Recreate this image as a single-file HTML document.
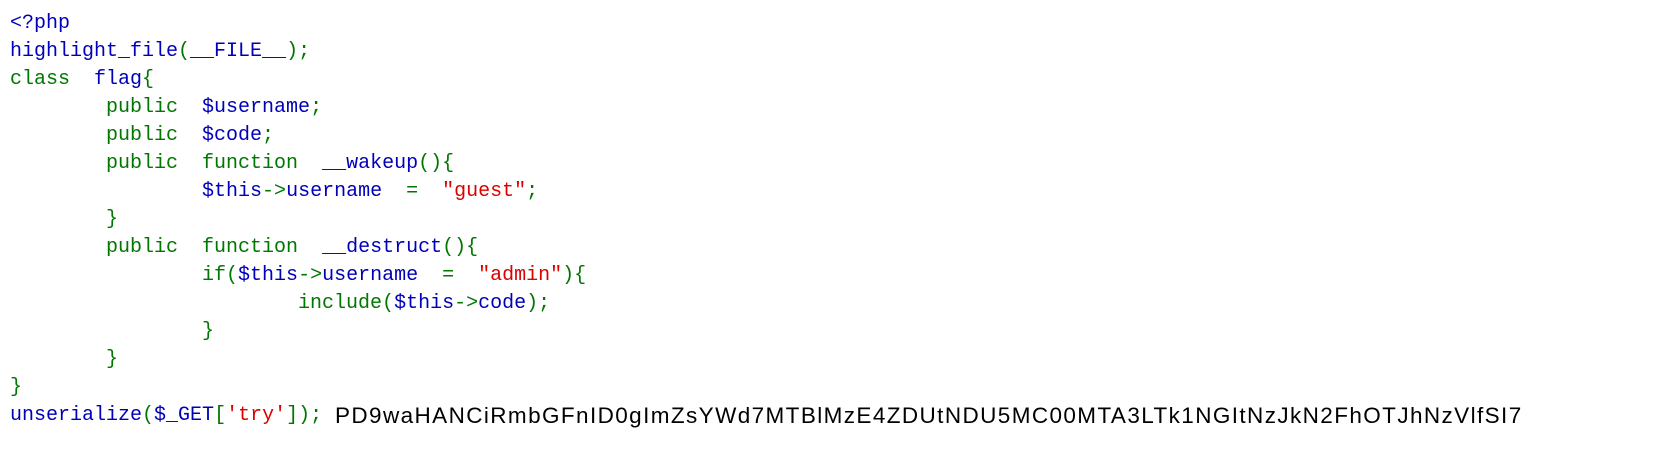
<!DOCTYPE html>
<html><head><meta charset="utf-8"><style>
html,body{margin:0;padding:0;background:#fff;width:1668px;height:450px;overflow:hidden}
pre{position:absolute;left:10px;top:10px;margin:0;font-family:"Liberation Mono",monospace;font-size:20px;line-height:28px;color:#0000BB;white-space:pre}
.k{color:#007700}.s{color:#DD0000}
.out{position:absolute;left:335px;top:402px;font-family:"Liberation Sans",sans-serif;font-size:22.5px;letter-spacing:1.4px;color:#000;white-space:nowrap;line-height:28px}
</style></head><body>
<pre>&lt;?php
highlight_file<span class="k">(</span>__FILE__<span class="k">);</span>
<span class="k">class  </span>flag<span class="k">{</span>
<span class="k">        public  </span>$username<span class="k">;</span>
<span class="k">        public  </span>$code<span class="k">;</span>
<span class="k">        public  function  </span>__wakeup<span class="k">(){</span>
                $this<span class="k">-&gt;</span>username  <span class="k">=  </span><span class="s">"guest"</span><span class="k">;</span>
<span class="k">        }</span>
<span class="k">        public  function  </span>__destruct<span class="k">(){</span>
<span class="k">                if(</span>$this<span class="k">-&gt;</span>username  <span class="k">=  </span><span class="s">"admin"</span><span class="k">){</span>
<span class="k">                        include(</span>$this<span class="k">-&gt;</span>code<span class="k">);</span>
<span class="k">                }</span>
<span class="k">        }</span>
<span class="k">}</span>
unserialize<span class="k">(</span>$_GET<span class="k">[</span><span class="s">'try'</span><span class="k">]);</span></pre>
<div class="out">PD9waHANCiRmbGFnID0gImZsYWd7MTBlMzE4ZDUtNDU5MC00MTA3LTk1NGItNzJkN2FhOTJhNzVlfSI7</div>
</body></html>
